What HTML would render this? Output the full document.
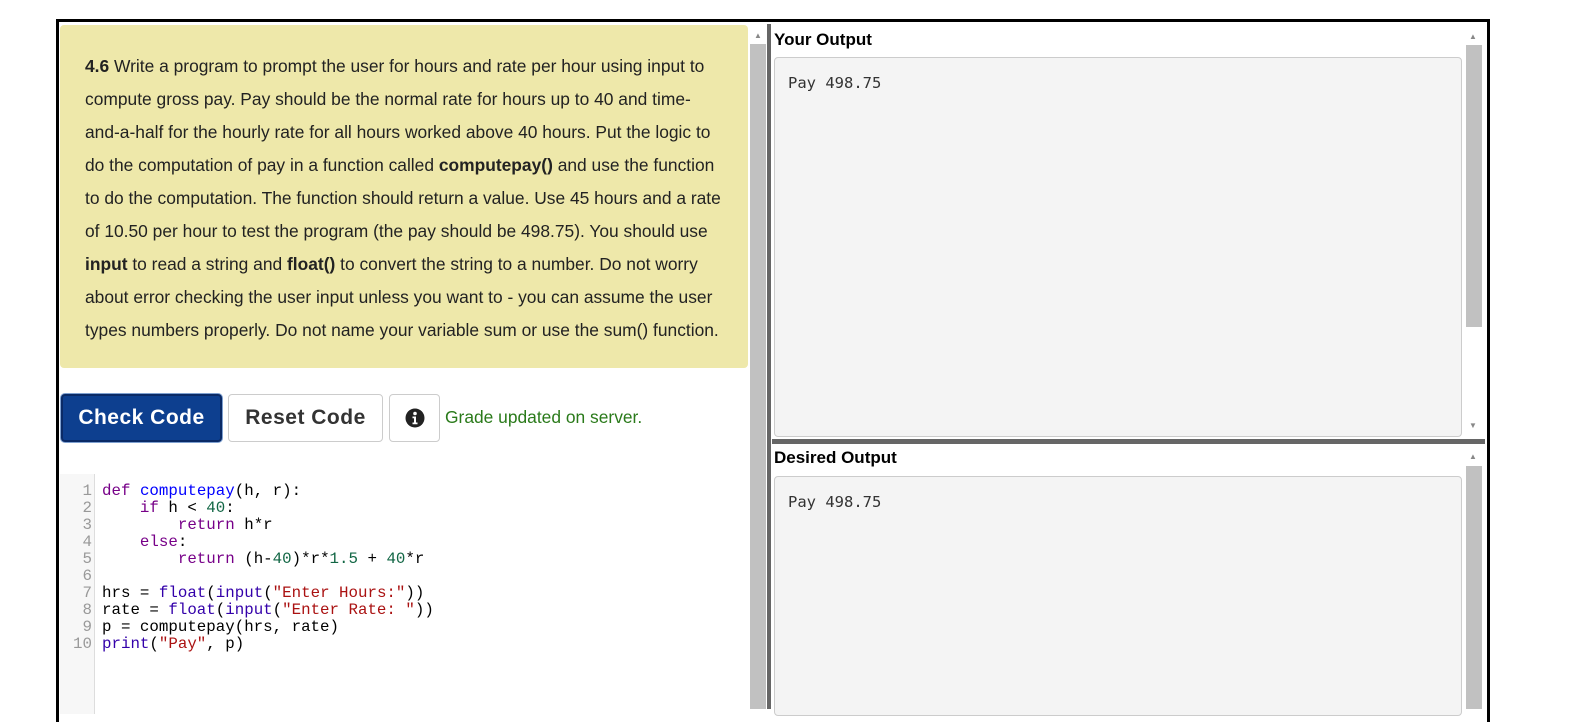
<!DOCTYPE html>
<html><head><style>
body{margin:0;width:1576px;height:709px;background:#fff;overflow:hidden;font-family:"Liberation Sans",Arial,sans-serif;position:relative}
.frame{position:absolute;left:56px;top:19px;width:1428px;height:700px;border:3px solid #000;border-bottom:none}
.q{position:absolute;left:60px;top:25px;width:663px;height:318px;background:#eee8aa;border-radius:4px;padding:25px 0 0 25px;font-size:17.4px;line-height:33px;color:#222;white-space:nowrap}
.btn{position:absolute;top:394px;height:48px;box-sizing:border-box;border-radius:4px;font-weight:bold;font-size:21px;letter-spacing:0.5px;display:flex;align-items:center;justify-content:center}
.sb{position:absolute;background:#c1c1c1}
.code{position:absolute;left:60px;top:474px;width:688px;height:240px;font-family:"Liberation Mono","DejaVu Sans Mono",monospace;font-size:15.8px;line-height:17px}
.gut{position:absolute;left:0;top:0;width:35px;height:240px;background:#f7f7f7;border-right:1px solid #ddd;color:#999;text-align:right;padding-top:9px;box-sizing:border-box;padding-right:2px}
.src{position:absolute;left:42px;top:9px;white-space:pre;color:#000}
.k{color:#708}.d{color:#00f}.n{color:#164}.s{color:#a11}.b{color:#30a}
.hd{position:absolute;left:774px;font-weight:bold;font-size:17px;color:#000}
.out{position:absolute;left:774px;width:688px;background:#f4f4f4;border:1px solid #ccc;border-radius:4px;box-sizing:border-box;font-family:"DejaVu Sans Mono",monospace;font-size:15.5px;color:#333;padding:16px 0 0 13px}
.arr{position:absolute;font-size:8px;color:#888}
</style></head><body>
<div class="frame"></div>
<div class="q"><b>4.6</b> Write a program to prompt the user for hours and rate per hour using input to<br>compute gross pay. Pay should be the normal rate for hours up to 40 and time-<br>and-a-half for the hourly rate for all hours worked above 40 hours. Put the logic to<br>do the computation of pay in a function called <b>computepay()</b> and use the function<br>to do the computation. The function should return a value. Use 45 hours and a rate<br>of 10.50 per hour to test the program (the pay should be 498.75). You should use<br><b>input</b> to read a string and <b>float()</b> to convert the string to a number. Do not worry<br>about error checking the user input unless you want to - you can assume the user<br>types numbers properly. Do not name your variable sum or use the sum() function.</div>
<div class="btn" style="left:61px;width:161px;background:#0d3f8f;color:#fff;border:2px solid #0a2a66;box-shadow:0 0 0 1px #7ea0d0">Check Code</div>
<div class="btn" style="left:228px;width:155px;background:#fff;color:#333;border:1px solid #ccc">Reset Code</div>
<div class="btn" style="left:389px;width:51px;background:#fff;border:1px solid #ccc"><svg width="20" height="20" viewBox="0 0 20 20"><circle cx="10" cy="10" r="9.5" fill="#222"/><circle cx="10" cy="5.5" r="1.8" fill="#fff"/><path d="M7.5 8.5h3.5v6h1.5v1.8h-5v-1.8h1.5v-4.2h-1.5z" fill="#fff"/></svg></div>
<div style="position:absolute;left:445px;top:407px;font-size:17.4px;color:#2a7a1a">Grade updated on server.</div>
<div class="code"><div class="gut">1<br>2<br>3<br>4<br>5<br>6<br>7<br>8<br>9<br>10</div><div class="src"><span class="k">def</span> <span class="d">computepay</span>(h, r):
    <span class="k">if</span> h &lt; <span class="n">40</span>:
        <span class="k">return</span> h*r
    <span class="k">else</span>:
        <span class="k">return</span> (h-<span class="n">40</span>)*r*<span class="n">1.5</span> + <span class="n">40</span>*r

hrs = <span class="b">float</span>(<span class="b">input</span>(<span class="s">"Enter Hours:"</span>))
rate = <span class="b">float</span>(<span class="b">input</span>(<span class="s">"Enter Rate: "</span>))
p = computepay(hrs, rate)
<span class="b">print</span>(<span class="s">"Pay"</span>, p)</div></div>
<div class="sb" style="left:750px;top:44px;width:16px;height:665px"></div>
<div class="arr" style="left:754px;top:31px">▲</div>
<div style="position:absolute;left:767px;top:24px;width:4px;height:685px;background:#666"></div>
<div class="hd" style="top:30px">Your Output</div>
<div class="out" style="top:57px;height:380px">Pay 498.75</div>
<div class="sb" style="left:1466px;top:45px;width:16px;height:282px"></div>
<div class="arr" style="left:1469px;top:32px">▲</div>
<div class="arr" style="left:1469px;top:421px">▼</div>
<div style="position:absolute;left:772px;top:439px;width:713px;height:5px;background:#666"></div>
<div class="hd" style="top:448px">Desired Output</div>
<div class="out" style="top:476px;height:240px">Pay 498.75</div>
<div class="sb" style="left:1466px;top:466px;width:16px;height:243px"></div>
<div class="arr" style="left:1469px;top:452px">▲</div>
</body></html>
